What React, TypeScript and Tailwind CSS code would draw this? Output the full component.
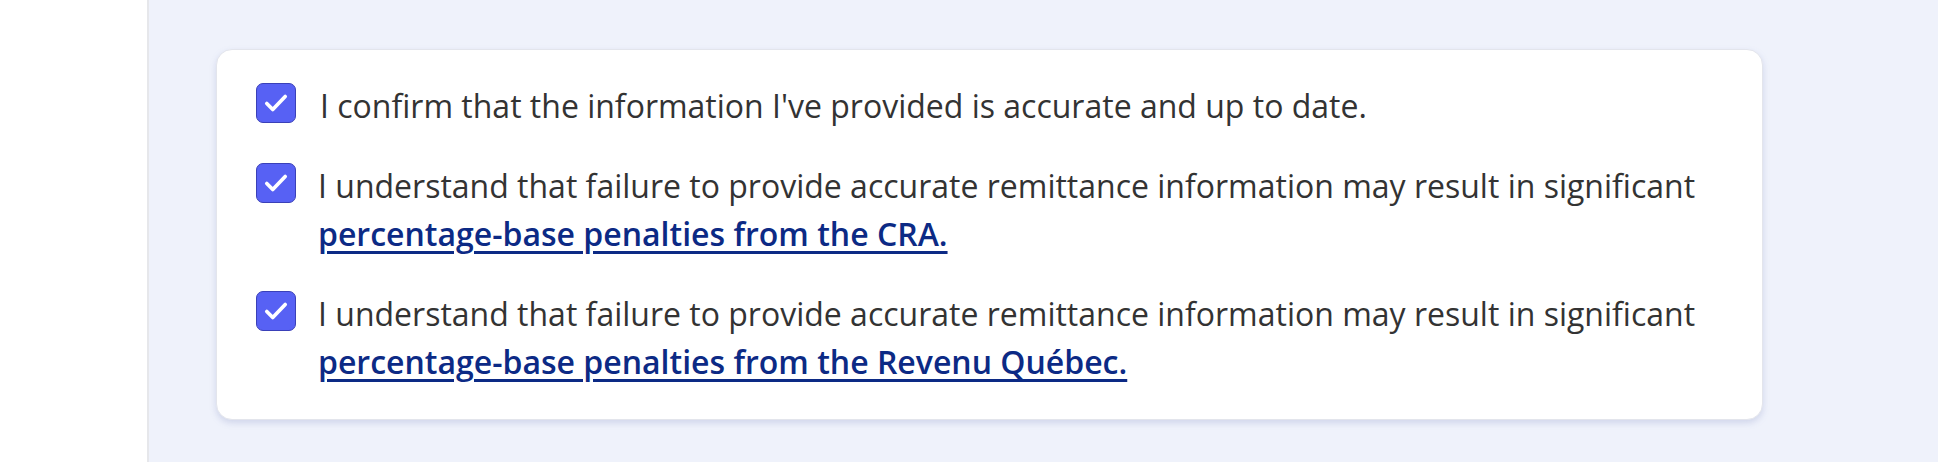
import React from "react";

const items = [
  {
    text: "I confirm that the information I've provided is accurate and up to date.",
  },
  {
    text: "I understand that failure to provide accurate remittance information may result in significant",
    link: "percentage-base penalties from the CRA.",
  },
  {
    text: "I understand that failure to provide accurate remittance information may result in significant",
    link: "percentage-base penalties from the Revenu Québec.",
  },
];

function CheckBox() {
  return (
    <span className="mt-[1px] flex h-[40px] w-[40px] shrink-0 items-center justify-center rounded-[7px] border border-[#3a40b8] bg-[#5761f4]">
      <svg width="26" height="26" viewBox="0 0 24 24" fill="none">
        <path
          d="M3.5 12.5l5.5 5.5L20.5 6"
          stroke="white"
          strokeWidth="3.4"
          strokeLinecap="round"
          strokeLinejoin="round"
        />
      </svg>
    </span>
  );
}

export default function App() {
  return (
    <div
      className="flex h-[462px] w-full bg-white"
      style={{ fontFamily: '"Open Sans", "Noto Sans", sans-serif' }}
    >
      <div className="w-[149px] shrink-0 border-r-2 border-[#e6e7eb] bg-white" />
      <div className="flex-1 bg-[#eff2fb] pl-[67px] pr-[175px] pt-[49px]">
        <div className="rounded-[16px] border border-[#e3e5ec] bg-white px-[39px] pt-[32px] pb-[33px] shadow-[0_3px_6px_rgba(120,130,190,0.25)]">
          <div className="flex flex-col gap-[32px]">
            {items.map((item, i) => (
              <label key={i} className="flex items-start gap-[22px]">
                <CheckBox />
                <div className="text-[32px] leading-[48px] text-[#333333]">
                  <span className={i === 0 ? "ml-[2px]" : ""}>{item.text}</span>
                  {item.link && (
                    <>
                      <br />
                      <a
                        href="#"
                        className="font-semibold text-[#0c2a85] underline decoration-[3px] underline-offset-[5px]"
                      >
                        {item.link}
                      </a>
                    </>
                  )}
                </div>
              </label>
            ))}
          </div>
        </div>
      </div>
    </div>
  );
}
